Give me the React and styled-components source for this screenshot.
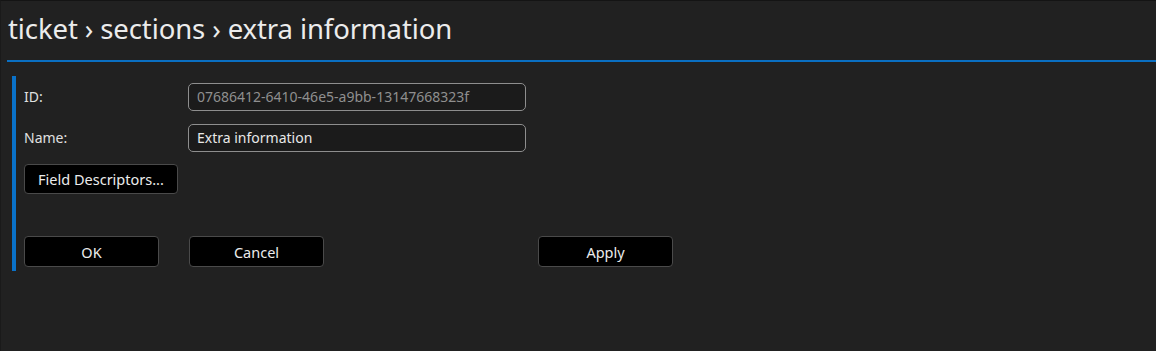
import React from "react";
import styled, { createGlobalStyle } from "styled-components";

const Global = createGlobalStyle`
  html, body {
    margin: 0;
    padding: 0;
    background: #202020;
  }
  body {
    font-family: "Segoe UI", "Noto Sans", "Open Sans", sans-serif;
    color: #e6e6e6;
  }
`;

const Page = styled.div`
  width: 1156px;
  height: 351px;
  box-sizing: border-box;
  background: #212121;
  border-top: 1px solid #141414;
  border-left: 1px solid #1a1a1a;
  overflow: hidden;
`;

const Header = styled.div`
  margin-left: 6px;
  height: 61px;
  box-sizing: border-box;
  border-bottom: 2px solid #0a6fc2;
  display: flex;
  align-items: center;
`;

const Title = styled.h1`
  margin: 0 0 4px 1px;
  font-size: 27.5px;
  font-weight: 400;
  color: #ececec;
  letter-spacing: -0.1px;
`;

const Panel = styled.div`
  margin: 14px 0 0 11px;
  border-left: 4px solid #0a72c9;
  height: 195px;
  box-sizing: border-box;
  padding: 6px 0 0 8px;
  display: flex;
  flex-direction: column;
`;

const Row = styled.div`
  display: flex;
  align-items: center;
  height: 29px;
  margin-bottom: ${(p) => p.$gap ?? 12}px;
`;

const Label = styled.div`
  width: 164px;
  font-size: 14px;
  color: #e0e0e0;
`;

const Field = styled.div`
  width: 338px;
  height: 28px;
  box-sizing: border-box;
  border: 1px solid #8e8e8e;
  border-radius: 5px;
  background: #1b1b1b;
  display: flex;
  align-items: center;
  padding-left: 8px;
  font-size: 14px;
  color: ${(p) => (p.$disabled ? "#8f8f8f" : "#e8e8e8")};
`;

const Button = styled.button`
  width: 135px;
  height: 31px;
  box-sizing: border-box;
  background: #000;
  border: 1px solid #4a4a4a;
  border-radius: 4px;
  color: #ececec;
  font-family: inherit;
  font-size: 14.5px;
  padding: 0;
  margin-left: ${(p) => p.$offset || 0}px;
`;

const WideButton = styled(Button)`
  width: 154px;
  height: 30px;
`;

const Actions = styled.div`
  display: flex;
  margin-top: 43px;
`;

export default function App() {
  return (
    <Page>
      <Global />
      <Header>
        <Title>ticket › sections › extra information</Title>
      </Header>
      <Panel>
        <Row>
          <Label>ID:</Label>
          <Field $disabled>07686412-6410-46e5-a9bb-13147668323f</Field>
        </Row>
        <Row>
          <Label>Name:</Label>
          <Field>Extra information</Field>
        </Row>
        <Row $gap={0}>
          <WideButton>Field Descriptors...</WideButton>
        </Row>
        <Actions>
          <Button>OK</Button>
          <Button $offset={30}>Cancel</Button>
          <Button $offset={214}>Apply</Button>
        </Actions>
      </Panel>
    </Page>
  );
}
